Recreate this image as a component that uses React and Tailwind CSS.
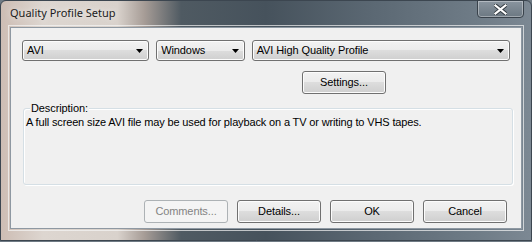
import React from "react";

const FONT = "font-['Tahoma','Liberation_Sans','DejaVu_Sans',sans-serif]";

function DownArrow() {
  return (
    <svg width="7" height="4" viewBox="0 0 7 4" className="shrink-0">
      <path d="M0 0h7L3.5 4z" fill="#000" />
    </svg>
  );
}

function Combo({ label, width }) {
  return (
    <div
      className={`${width} h-[21px] flex items-center justify-between pl-[4px] pr-[5px] rounded-[3px] border border-[#707070] shadow-[inset_0_0_0_1px_#fcfcfc] bg-[linear-gradient(#f2f2f2_0%,#ebebeb_50%,#dddddd_50%,#cfcfcf_100%)] text-[11px] tracking-[-0.1px] text-black`}
    >
      <span className="leading-none">{label}</span>
      <DownArrow />
    </div>
  );
}

function Button({ children, disabled, className = "" }) {
  return (
    <div
      className={[
        "w-[84px] h-[23px] flex items-center justify-center rounded-[3px] border text-[11px] tracking-[-0.1px]",
        disabled
          ? "border-[#adb2b5] bg-[#f4f4f4] text-[#838383]"
          : "border-[#707070] text-black shadow-[inset_0_0_0_1px_#fcfcfc] bg-[linear-gradient(#f2f2f2_0%,#ebebeb_50%,#dddddd_50%,#cfcfcf_100%)]",
        className,
      ].join(" ")}
    >
      {children}
    </div>
  );
}

export default function App() {
  return (
    <div className="w-[532px] h-[242px] bg-[#6f7a84] overflow-hidden">
      {/* window frame */}
      <div className="w-[532px] h-[241px] rounded-t-[6px] border border-[#3c4650] bg-[linear-gradient(90deg,#cdbdb4_0%,#ddd6d0_8%,#d9d2cc_22%,#a79d97_27%,#4f5a62_34%,#46525c_50%,#5b6873_70%,#6f7c87_90%,#7c8893_100%)] flex flex-col">
        {/* title bar */}
        <div className="h-[24px] flex items-start justify-between">
          <div className="pl-[9px] pt-[4px] text-[11px] text-[#1b1b1b] font-['Noto_Sans','Open_Sans',sans-serif] [text-shadow:0_0_6px_rgba(255,255,255,0.9)]">
            Quality Profile Setup
          </div>
          <div className="mr-[7px] -mt-px w-[47px] h-[18px] rounded-b-[4px] border border-[#39424b] shadow-[inset_0_0_0_1px_rgba(255,255,255,0.35)] bg-[linear-gradient(#8a959f,#6c7882)] flex items-center justify-center">
            <svg width="13" height="11" viewBox="0 0 13 11">
              <path
                d="M1.5 1.5L11.5 9.5M11.5 1.5L1.5 9.5"
                stroke="#2f363c"
                strokeWidth="4"
                strokeLinecap="square"
              />
              <path
                d="M1.5 1.5L11.5 9.5M11.5 1.5L1.5 9.5"
                stroke="#ffffff"
                strokeWidth="2.2"
                strokeLinecap="square"
              />
            </svg>
          </div>
        </div>

        {/* client area */}
        <div className="ml-[7px] w-[516px] h-[206px] border border-[#f5f5f5]/70 p-px">
          <div className={`w-full h-full bg-[#f0f0f0] border border-[#8e98a2] ${FONT} pt-[12px] px-[11px] flex flex-col`}>
            <div className="flex gap-[7px]">
              <Combo label="AVI" width="w-[128px]" />
              <Combo label="Windows" width="w-[89px]" />
              <Combo label="AVI High Quality Profile" width="w-[260px]" />
            </div>

            <div className="mt-[10px] pl-[280px]">
              <Button>Settings...</Button>
            </div>

            <div className="relative mt-[14px] ml-[1px] w-[490px] h-[77px] rounded-[3px] border border-[#d5dfe5] shadow-[1px_1px_0_#ffffff,inset_1px_1px_0_#ffffff]">
              <span className="absolute left-[6px] -top-[8px] px-[1px] bg-[#f0f0f0] text-[11px] tracking-[-0.1px] text-black leading-[14px]">
                Description:
              </span>
              <p className="pt-[6px] pl-[2px] text-[11px] tracking-[-0.14px] text-black leading-[14px]">
                A full screen size AVI file may be used for playback on a TV or writing to VHS tapes.
              </p>
            </div>

            <div className="mt-[15px] flex justify-end gap-[9px] pr-[3px]">
              <Button disabled>Comments...</Button>
              <Button>Details...</Button>
              <Button>OK</Button>
              <Button>Cancel</Button>
            </div>
          </div>
        </div>
      </div>
    </div>
  );
}
